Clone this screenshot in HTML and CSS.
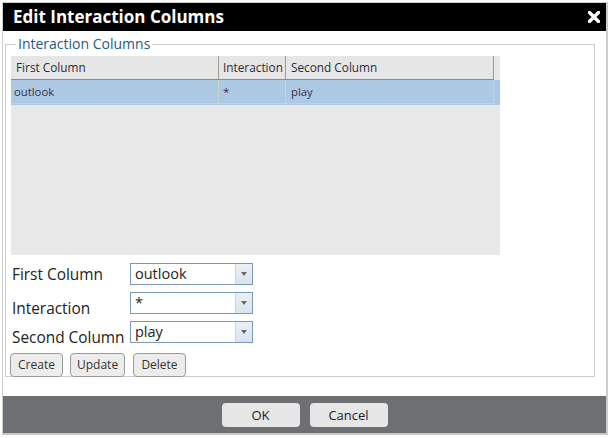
FILE: index.html
```html
<!DOCTYPE html>
<html>
<head>
<meta charset="utf-8">
<link rel="stylesheet" href="styles.css">
</head>
<body>
<div class="dialog">
  <div class="titlebar">
    <span class="title">Edit Interaction Columns</span>
    <svg class="close" width="12" height="12" viewBox="0 0 12 12"><path d="M1.5 1.5 L10.5 10.5 M10.5 1.5 L1.5 10.5" stroke="#fff" stroke-width="3.4" stroke-linecap="square"/></svg>
  </div>
  <div class="content">
    <fieldset class="group">
      <legend class="legend">Interaction Columns</legend>
      <div class="grid">
        <div class="grid-head">
          <div class="hcell c1">First Column</div>
          <div class="hcell c2">Interaction</div>
          <div class="hcell c3">Second Column</div>
        </div>
        <div class="grid-row selected">
          <div class="cell c1">outlook</div>
          <div class="cell c2">*</div>
          <div class="cell c3">play</div>
        </div>
      </div>
      <div class="form">
        <div class="frow r1">
          <label class="flabel">First Column</label>
          <div class="select"><span class="sval">outlook</span><span class="sbtn"><i class="tri"></i></span></div>
        </div>
        <div class="frow r2">
          <label class="flabel low">Interaction</label>
          <div class="select"><span class="sval">*</span><span class="sbtn"><i class="tri"></i></span></div>
        </div>
        <div class="frow r3">
          <label class="flabel low">Second Column</label>
          <div class="select"><span class="sval">play</span><span class="sbtn"><i class="tri"></i></span></div>
        </div>
      </div>
      <div class="actions">
        <button class="btn b-create">Create</button>
        <button class="btn b-update">Update</button>
        <button class="btn b-delete">Delete</button>
      </div>
    </fieldset>
  </div>
  <div class="footer">
    <button class="fbtn">OK</button>
    <button class="fbtn">Cancel</button>
  </div>
</div>
</body>
</html>
```

FILE: styles.css
```css
html, body {
  margin: 0;
  padding: 0;
  background: #fff;
}
body {
  font-family: "Open Sans", "DejaVu Sans", sans-serif;
  color: #333;
}
.dialog {
  margin: 2px 0 0 2px;
  width: 603px;
  border: 1px solid #cfcfcf;
  border-bottom: 2px solid #c8c8c8;
  border-right: 2px solid #cdcdcd;
  background: #fff;
}
.titlebar {
  height: 28px;
  background: #000;
  display: flex;
  align-items: center;
  justify-content: space-between;
  padding: 0 6px 0 10px;
}
.title {
  color: #fff;
  font-weight: bold;
  font-size: 17px;
  line-height: 28px;
}
.close {
  display: block;
  margin-top: -1px;
}
.content {
  height: 365px;
  padding-top: 5px;
  box-sizing: border-box;
}
.group {
  margin: 0 11px 0 2px;
  padding: 4px 0 0 5px;
  border: 1px solid #cccccc;
  min-width: 0;
}
.legend {
  font-size: 14px;
  line-height: 16px;
  color: #1e5b86;
  padding: 0 2px;
  margin-left: 5px;
}
.grid {
  width: 489px;
  height: 199px;
  background: #e8e8e8;
}
.grid-head {
  display: flex;
  height: 23px;
  border-bottom: 1px solid #8c8c8c;
  width: 483px;
  background: #e6e6e6;
}
.hcell {
  font-size: 11.8px;
  line-height: 23px;
  color: #2e2a38;
  border-right: 1px solid #9d9d90;
  box-sizing: border-box;
  white-space: nowrap;
  overflow: hidden;
}
.hcell.c1 { width: 208px; padding-left: 5px; }
.hcell.c2 { width: 67px; padding-left: 4px; }
.hcell.c3 { width: 208px; padding-left: 5px; }
.grid-row {
  display: flex;
  height: 25px;
}
.grid-row.selected {
  background: #adc8e3;
}
.cell {
  font-size: 11.3px;
  line-height: 23px;
  color: #3a2f4a;
  box-sizing: border-box;
  border-right: 1px solid #cfd4c8;
  border-bottom: 1px solid #d8d1a8;
  height: 24px;
}
.cell.c1 { width: 208px; padding-left: 3px; }
.cell.c2 { width: 67px; padding-left: 4px; }
.cell.c3 { width: 208px; padding-left: 5px; border-right-color: #d8d1a8; }
.form {
  padding-top: 8px;
  display: flex;
  flex-direction: column;
  gap: 7px;
}
.frow {
  display: flex;
  align-items: flex-start;
  height: 22px;
}
.flabel {
  width: 118px;
  font-size: 15.4px;
  line-height: 22px;
  color: #222;
  padding-left: 1px;
  padding-top: 1px;
  white-space: nowrap;
}
.flabel.low {
  padding-top: 6px;
}
.select {
  width: 123px;
  height: 22px;
  box-sizing: border-box;
  border: 1px solid #7a98bd;
  display: flex;
  background: #fff;
}
.sval {
  flex: 1;
  font-size: 14.5px;
  line-height: 20px;
  padding-left: 4px;
  color: #222;
}
.sbtn {
  width: 16px;
  border-left: 1px solid #c9d6e6;
  background: linear-gradient(#eaf0f7, #d9e3ee);
  display: flex;
  align-items: center;
  justify-content: center;
}
.tri {
  display: block;
  width: 0;
  height: 0;
  border-left: 3.5px solid transparent;
  border-right: 3.5px solid transparent;
  border-top: 4px solid #666;
}
.actions {
  display: flex;
  gap: 7px;
  margin-top: 10px;
  margin-left: -1px;
  margin-bottom: -1px;
}
.btn {
  font-family: "Open Sans", "DejaVu Sans", sans-serif;
  font-size: 12px;
  color: #333;
  height: 24px;
  padding: 0 6px;
  background: #ececec;
  border: 1px solid #9a9a9a;
  border-radius: 4px;
  line-height: 20px;
}
.b-create { width: 53px; }
.b-update { width: 55px; }
.b-delete { width: 53px; margin-left: 1px; }
.footer {
  height: 37px;
  background: #6e6f73;
  display: flex;
  justify-content: center;
  align-items: flex-start;
  gap: 10px;
  padding-top: 7px;
  box-sizing: border-box;
}
.fbtn {
  font-family: "Open Sans", "DejaVu Sans", sans-serif;
  width: 78px;
  height: 24px;
  font-size: 13px;
  color: #222;
  background: #e6e6e6;
  border: none;
  border-radius: 4px;
  padding: 0;
}
```
